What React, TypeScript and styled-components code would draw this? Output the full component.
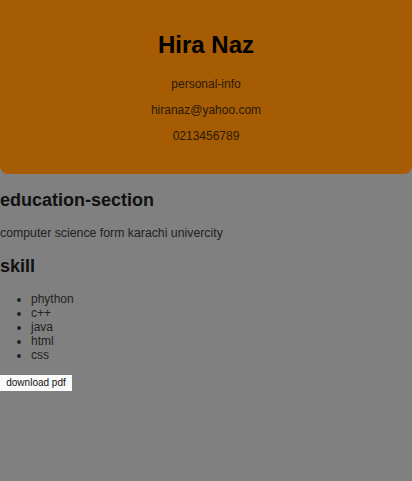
import React from "react";
import styled, { createGlobalStyle } from "styled-components";

const Global = createGlobalStyle`
  html, body { margin: 0; padding: 0; background: #808080; }
  body { font-family: "Liberation Sans", Arial, sans-serif; color: #111; }
`;

const Page = styled.div`
  min-height: 481px;
  background: #808080;
`;

const Header = styled.header`
  background: #a55c03;
  border-radius: 0 0 8px 8px;
  padding: 31px 0 31px;
  text-align: center;
`;

const Name = styled.h1`
  margin: 0 0 18px;
  font-size: 24px;
  line-height: 28px;
  font-weight: bold;
  color: #000;
`;

const Info = styled.p`
  margin: 0 0 12px;
  font-size: 12px;
  line-height: 14px;
  color: #2a1a08;
  &:last-child { margin-bottom: 0; }
`;

const Section = styled.section`
  padding: 0;
`;

const Heading = styled.h2<{ $top: number }>`
  margin: ${(p) => p.$top}px 0 0;
  font-size: 18px;
  line-height: 21px;
  font-weight: bold;
  color: #111;
`;

const Text = styled.p`
  margin: 15px 0 0;
  font-size: 12.3px;
  line-height: 14px;
  color: #222;
`;

const List = styled.ul`
  margin: 15px 0 0;
  padding-left: 31px;
  font-size: 12px;
  line-height: 14px;
  color: #222;
`;

const Button = styled.button`
  margin-top: 13px;
  display: block;
  width: 72px;
  height: 16px;
  background: #fafafa;
  border: none;
  padding: 0;
  font-family: "Liberation Sans", Arial, sans-serif;
  font-size: 10px;
  line-height: 16px;
  color: #111;
`;

export default function App() {
  return (
    <Page>
      <Global />
      <Header>
        <Name>Hira Naz</Name>
        <Info>personal-info</Info>
        <Info>hiranaz@yahoo.com</Info>
        <Info>0213456789</Info>
      </Header>
      <Section>
        <Heading $top={16}>education-section</Heading>
        <Text>computer science form karachi univercity</Text>
      </Section>
      <Section>
        <Heading $top={16}>skill</Heading>
        <List>
          <li>phython</li>
          <li>c++</li>
          <li>java</li>
          <li>html</li>
          <li>css</li>
        </List>
      </Section>
      <Button>download pdf</Button>
    </Page>
  );
}
